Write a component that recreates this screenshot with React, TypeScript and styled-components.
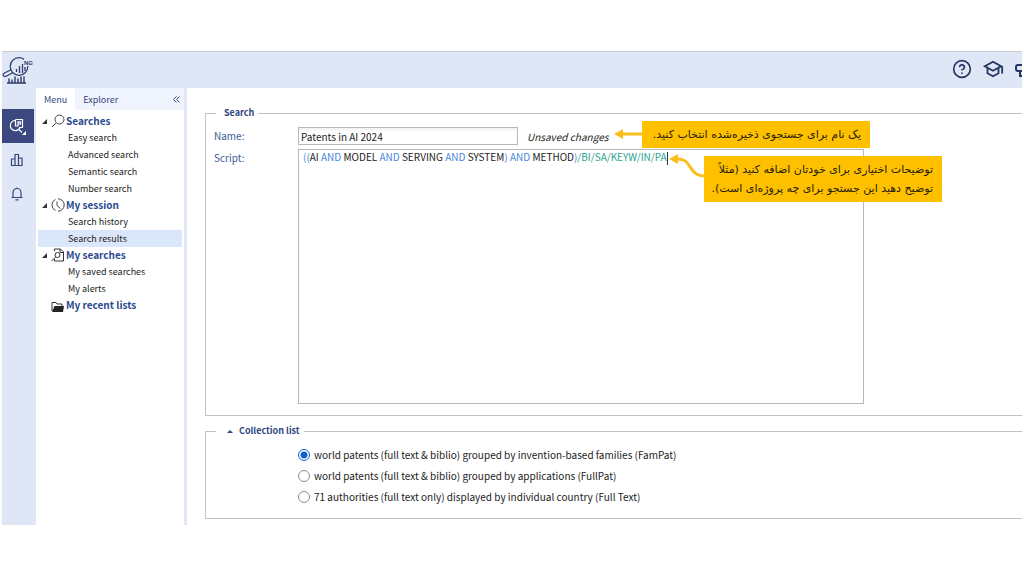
import React, { useState } from "react";
import styled, { createGlobalStyle } from "styled-components";
import { MdOutlineSchool } from "react-icons/md";
import { CircleHelp } from "lucide-react";

const GlobalStyle = createGlobalStyle`
  *, *::before, *::after { box-sizing: border-box; }
  body {
    margin: 0;
    background: #fff;
    color: #222;
    font: 9px/17px "Noto Sans CJK SC", "Noto Sans", sans-serif;
  }
  button, input { font: inherit; color: inherit; }
  button { padding: 0; border: 0; background: none; cursor: pointer; }
  a { color: inherit; text-decoration: none; }
`;

const Page = styled.div`
  padding: 51px 2px;
`;

const Shell = styled.div`
  background: #dfe7f6;
  overflow: hidden;
`;

const Header = styled.header`
  display: flex;
  align-items: center;
  justify-content: space-between;
  height: 37px;
  padding-bottom: 2px;
  border-top: 1px solid #c9cfda;
`;

const Logo = styled.a`
  display: block;
  height: 28px;
  svg { display: block; }
`;

const HeaderActions = styled.div`
  display: flex;
  align-items: center;
  gap: 10px;
  margin-right: -10px;
  color: #263663;
`;

const IconButton = styled.button`
  display: grid;
  place-items: center;
  width: 20px;
  height: 22px;
`;

const Columns = styled.div`
  display: flex;
`;

const Rail = styled.nav`
  flex: none;
  display: flex;
  flex-direction: column;
  width: 34px;
  padding-top: 21px;
`;

const RailButton = styled.button<{ $active?: boolean }>`
  display: grid;
  place-items: center;
  width: 32px;
  height: 34px;
  padding-right: 2px;
  background: ${(p) => (p.$active ? "#3c4880" : "transparent")};
  color: ${(p) => (p.$active ? "#fff" : "#36437a")};
`;

const Sidebar = styled.aside`
  flex: none;
  width: 148px;
  margin-right: 3px;
  background: #fff;
`;

const Tabs = styled.div`
  display: flex;
  height: 22px;
  background: #f0f5fd;
  color: #36477d;
`;

const Tab = styled.button<{ $active?: boolean }>`
  padding: 0 8px;
  background: ${(p) => (p.$active ? "#fff" : "transparent")};
`;

const Collapse = styled.button`
  margin-left: auto;
  padding-right: 4px;
`;

const Tree = styled.div`
  padding: 3px 2px 0;
`;

const Branch = styled.button`
  display: flex;
  align-items: center;
  width: 100%;
  height: 16px;
  padding-left: 4px;
  color: #2b4a8e;
  font-size: 10px;
  line-height: 16px;
  font-weight: 700;
  white-space: nowrap;
`;

const Arrow = styled.span`
  display: flex;
  width: 9px;
`;

const BranchIcon = styled.span`
  display: flex;
  width: 15px;
`;

const Leaf = styled.a<{ $active?: boolean }>`
  display: block;
  height: 17px;
  padding-left: 30px;
  background: ${(p) => (p.$active ? "#dae6f9" : "transparent")};
`;

const Main = styled.main`
  flex: 1;
  min-width: 0;
  display: flex;
  flex-direction: column;
  gap: 7px;
  padding: 17px 0 6px 18px;
  background: #fff;
  font-size: 10px;
`;

const Group = styled.fieldset`
  position: relative;
  min-width: 0;
  margin: 0;
  padding: 0 0 11px 8px;
  border: 1px solid #c2c2c6;
  border-right: 0;
`;

const Legend = styled.legend`
  margin-left: 2px;
  padding: 0 4px 0 8px;
  color: #2f477f;
  font-size: 9px;
  font-weight: 700;
  line-height: 16px;
`;

const LegendButton = styled.button`
  display: flex;
  align-items: center;
  gap: 6px;
  padding-left: 3px;
  line-height: 16px;
`;

const Form = styled.div`
  display: grid;
  grid-template-columns: 84px minmax(0, 1fr);
  row-gap: 4px;
  padding: 6px 158px 0 0;
`;

const Label = styled.label`
  color: #3c5c93;
  line-height: 18px;
`;

const NameRow = styled.div`
  display: flex;
  align-items: center;
  gap: 9px;
`;

const NameInput = styled.input`
  width: 220px;
  height: 18px;
  padding: 0 2px;
  border: 1px solid #b8b8bc;
  background: linear-gradient(#f1f1f1, #fff 4px);
  outline: 0;
`;

const Status = styled.span`
  font-style: italic;
`;

const Editor = styled.div`
  height: 255px;
  padding: 0 4px;
  border: 1px solid #b8b8bc;
  line-height: 14px;
  white-space: pre-wrap;
  outline: 0;
`;

const Operator = styled.span`
  color: #4a86dc;
`;

const Field = styled.span`
  color: #2ba393;
`;

const Caret = styled.span`
  display: inline-block;
  width: 1px;
  height: 13px;
  background: #333;
  vertical-align: middle;
`;

const Note = styled.div<{ $x: number; $y: number; $width: number }>`
  position: absolute;
  z-index: 1;
  left: ${(p) => p.$x}px;
  top: ${(p) => p.$y}px;
  width: ${(p) => p.$width}px;
  padding: 4px 9px;
  background: #ffc000;
  color: #241c06;
  font-family: "DejaVu Sans", sans-serif;
  font-size: 11px;
  line-height: 19px;
  white-space: nowrap;
`;

const Pointer = styled.svg<{ $x: number; $y: number }>`
  position: absolute;
  z-index: 1;
  left: ${(p) => p.$x}px;
  top: ${(p) => p.$y}px;
`;

const Options = styled.div`
  padding: 5px 0 0 84px;
`;

const Option = styled.label`
  display: flex;
  align-items: center;
  gap: 4px;
  height: 21px;
`;

const Radio = styled.input`
  appearance: none;
  width: 12px;
  height: 12px;
  margin: 0;
  border: 1px solid #8c8c90;
  border-radius: 50%;
  background: #fff;
  &:checked {
    border-color: #1565cf;
    background: radial-gradient(#1260cc 3px, #fff 4px);
  }
`;

function LogoMark() {
  return (
    <svg width="33" height="30" viewBox="0 0 33 30" fill="none" stroke="#2c3b6b">
      <circle cx="17" cy="11.500" r="8.800" strokeWidth="1.200" />
      <path d="M9.500 14.500 2.500 18q-2 1-1.200 2.500t3 .7L11 17.500" strokeWidth="1.200" />
      <path d="M14.500 17v-3M17.500 18v-7M20.500 18v-9M23 16v-4" strokeWidth="1.300" />
      <path d="M7 27.500v-4M10 27.500v-3M13 27.500v-6M16 27.500v-4M19 27.500v-6M22 27.500v-6M5 28h19" strokeWidth="1.400" />
      <rect x="22" y="4" width="11" height="7" fill="#dfe7f6" stroke="none" />
      <text x="22" y="10" fill="#2c3b6b" stroke="none" fontSize="6" fontWeight="700" fontFamily="Liberation Sans, sans-serif">NG</text>
    </svg>
  );
}

function PatentSearchIcon() {
  return (
    <svg width="20" height="20" viewBox="0 0 20 20" fill="none" stroke="currentColor" strokeWidth="1.200">
      <path d="M8.500 4.500a5 5 0 1 0 4.500 7M11.500 13l3.500 3.500" />
      <path d="M8.500 3.500h7v8h-3.500M8.500 3.500v6.500h3M11 5.800h2.500v2.200h-2.500zM11 5.800v4" />
      <path d="M19 15v4h-4z" fill="currentColor" stroke="none" />
    </svg>
  );
}

function ChartIcon() {
  return (
    <svg width="14" height="14" viewBox="0 0 14 14" fill="none" stroke="currentColor" strokeWidth="1.200">
      <path d="M1.500 6h3.500v6.500h-3.500zM5 1.500h3.500v11h-3.500zM8.500 5h3.500v7.500h-3.500z" />
    </svg>
  );
}

function BellIcon() {
  return (
    <svg width="14" height="14" viewBox="0 0 14 14" fill="none" stroke="currentColor" strokeWidth="1.200">
      <path d="M1.500 10.500h11M3 10.500v-5a4 4 0 0 1 8 0v5M5.500 12.800h3M7 1.500V.5" />
    </svg>
  );
}

function MegaphoneIcon() {
  return (
    <svg width="20" height="20" viewBox="0 0 20 20" fill="none" stroke="currentColor" strokeWidth="2">
      <path d="M15 12H6a2 2 0 0 1-2-2V8a2 2 0 0 1 2-2h9l4-3v12l-4-3M8 12v5h3v-5" />
    </svg>
  );
}

function OpenArrow() {
  return (
    <svg width="5" height="5" viewBox="0 0 5 5" aria-hidden="true">
      <path d="M5 0v5H0z" fill="#333" />
    </svg>
  );
}

const branchIcons: Record<string, React.ReactNode> = {
  search: (
    <svg width="14" height="14" viewBox="0 0 14 14" fill="none" stroke="#444">
      <circle cx="8.500" cy="5.500" r="4.500" />
      <path d="m5 9-4 4" />
    </svg>
  ),
  clock: (
    <svg width="14" height="14" viewBox="0 0 14 14" fill="none" stroke="#444">
      <path d="M4.500 1.400A6.200 6.200 0 0 0 4.500 12.600M7 .8A6.200 6.200 0 0 1 7 13.200M6 3.500v4l3.500 3" />
    </svg>
  ),
  saved: (
    <svg width="14" height="14" viewBox="0 0 14 14" fill="none" stroke="#333">
      <path d="M3.500 3V1h6l3 3v9h-9v-2M9 1v3.500h3.500" />
      <circle cx="6.500" cy="7" r="2.500" />
      <path d="m4.500 9-4 4" />
    </svg>
  ),
  folder: (
    <svg width="14" height="14" viewBox="0 0 14 14">
      <path d="M1 13V4.500h4l1 1.500h5v2" fill="none" stroke="#333" />
      <path d="M1 14 3.500 8H13l-1 6z" fill="#222" />
    </svg>
  ),
};

const tree = [
  { title: "Searches", icon: "search", items: ["Easy search", "Advanced search", "Semantic search", "Number search"] },
  { title: "My session", icon: "clock", items: ["Search history", "Search results"] },
  { title: "My searches", icon: "saved", items: ["My saved searches", "My alerts"] },
  { title: "My recent lists", icon: "folder", items: [] },
];

const collections = [
  "world patents (full text & biblio) grouped by invention-based families (FamPat)",
  "world patents (full text & biblio) grouped by applications (FullPat)",
  "71 authorities (full text only) displayed by individual country (Full Text)",
];

export default function App() {
  const [name, setName] = useState("Patents in AI 2024");
  const [collection, setCollection] = useState(0);
  return (
    <Page>
      <GlobalStyle />
      <Shell>
        <Header>
          <Logo href="#" aria-label="Home"><LogoMark /></Logo>
          <HeaderActions>
            <IconButton aria-label="Help"><CircleHelp size={20} strokeWidth={2} /></IconButton>
            <IconButton aria-label="Training"><MdOutlineSchool size={22} /></IconButton>
            <IconButton aria-label="Announcements"><MegaphoneIcon /></IconButton>
          </HeaderActions>
        </Header>
        <Columns>
          <Rail aria-label="Sections">
            <RailButton $active aria-label="Patent search"><PatentSearchIcon /></RailButton>
            <RailButton aria-label="Analysis"><ChartIcon /></RailButton>
            <RailButton aria-label="Alerts"><BellIcon /></RailButton>
          </Rail>
          <Sidebar>
            <Tabs>
              <Tab $active>Menu</Tab>
              <Tab>Explorer</Tab>
              <Collapse aria-label="Collapse menu">
                <svg width="7" height="7" viewBox="0 0 7 7" fill="none" stroke="currentColor">
                  <path d="M3.500.5l-3 3 3 3M6.500.5l-3 3 3 3" />
                </svg>
              </Collapse>
            </Tabs>
            <Tree>
              {tree.map((branch) => (
                <React.Fragment key={branch.title}>
                  <Branch>
                    <Arrow>{branch.items.length > 0 && <OpenArrow />}</Arrow>
                    <BranchIcon>{branchIcons[branch.icon]}</BranchIcon>
                    {branch.title}
                  </Branch>
                  {branch.items.map((item) => (
                    <Leaf key={item} href="#" $active={item === "Search results"}>{item}</Leaf>
                  ))}
                </React.Fragment>
              ))}
            </Tree>
          </Sidebar>
          <Main>
            <Group>
              <Legend>Search</Legend>
              <Form>
                <Label htmlFor="name">Name:</Label>
                <NameRow>
                  <NameInput id="name" value={name} onChange={(e) => setName(e.target.value)} />
                  <Status>Unsaved changes</Status>
                </NameRow>
                <Label id="script-label">Script:</Label>
                <Editor role="textbox" aria-multiline="true" aria-labelledby="script-label" contentEditable suppressContentEditableWarning spellCheck={false}>
                  <Operator>((</Operator>AI <Operator>AND</Operator> MODEL <Operator>AND</Operator> SERVING <Operator>AND</Operator> SYSTEM<Operator>) AND</Operator> METHOD<Operator>)</Operator><Field>/BI/SA/KEYW/IN/PA</Field><Caret />
                </Editor>
              </Form>
              <Pointer $x={407} $y={7} width="31" height="12" viewBox="0 0 31 12">
                <path d="M8 6h23" stroke="#f9be1c" strokeWidth="3" />
                <path d="M1 6 10 1v10z" fill="#f9be1c" />
              </Pointer>
              <Note dir="rtl" lang="fa" $x={436} $y={0} $width={228}>یک نام برای جستجوی ذخیره‌شده انتخاب کنید.</Note>
              <Pointer $x={462} $y={32} width="38" height="30" viewBox="0 0 38 30">
                <path d="M8 6c18-1 10 17 30 17" fill="none" stroke="#f9be1c" strokeWidth="3" />
                <path d="M1 6 10 1v10z" fill="#f9be1c" />
              </Pointer>
              <Note dir="rtl" lang="fa" $x={498} $y={35} $width={238}>
                توضیحات اختیاری برای خودتان اضافه کنید (مثلاً
                <br />
                توضیح دهید این جستجو برای چه پروژه‌ای است).
              </Note>
            </Group>
            <Group>
              <Legend>
                <LegendButton type="button" aria-expanded="true">
                  <svg width="6" height="3" viewBox="0 0 6 3" aria-hidden="true"><path d="M3 0 6 3H0z" fill="#2f477f" /></svg>
                  Collection list
                </LegendButton>
              </Legend>
              <Options>
                {collections.map((text, i) => (
                  <Option key={text}>
                    <Radio type="radio" name="collection" checked={collection === i} onChange={() => setCollection(i)} />
                    {text}
                  </Option>
                ))}
              </Options>
            </Group>
          </Main>
        </Columns>
      </Shell>
    </Page>
  );
}
